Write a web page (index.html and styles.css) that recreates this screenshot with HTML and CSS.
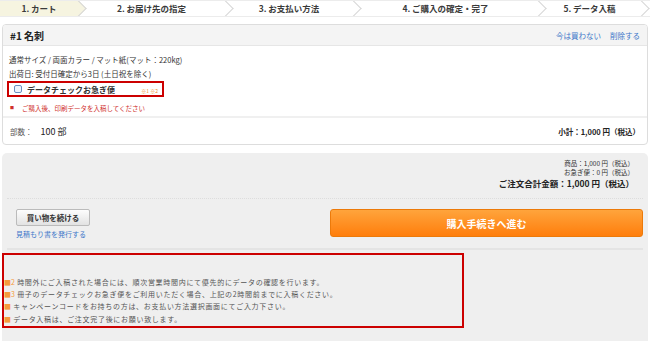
FILE: index.html
```html
<!DOCTYPE html>
<html lang="ja">
<head>
    <meta charset="UTF-8">
    <title>カート</title>
    <link rel="stylesheet" href="styles.css">
</head>
<body>
    <!-- ステップ表示 -->
    <div class="steps">
        <div class="step step-1 current">1. カート</div>
        <div class="step step-2">2. お届け先の指定</div>
        <div class="step step-3">3. お支払い方法</div>
        <div class="step step-4">4. ご購入の確定・完了</div>
        <div class="step step-5">5. データ入稿</div>
    </div>

    <!-- 商品カード -->
    <div class="card">
        <div class="card-head">
            <h2>#1 名刺</h2>
            <div class="head-links">
                <a href="#">今は買わない</a>
                <a href="#">削除する</a>
            </div>
        </div>
        <div class="card-body">
            <p class="spec">通常サイズ / 両面カラー / マット紙(マット：220kg)</p>
            <p class="spec">出荷日: 受付日確定から3日 (土日祝を除く)</p>
            <label class="express">
                <span class="checkbox"></span>
                <span class="express-label">データチェックお急ぎ便</span>
                <span class="express-note">※1 ※2</span>
            </label>
            <p class="warn"><span>■</span>ご購入後、印刷データを入稿してください</p>
        </div>
        <div class="card-foot">
            <div class="qty"><span>部数：</span> 100 部</div>
            <div class="subtotal">小計：1,000 円（税込）</div>
        </div>
    </div>

    <!-- 合計・購入 -->
    <div class="checkout">
        <div class="summary">
            <p>商品：1,000 円（税込）</p>
            <p>お急ぎ便：0 円（税込）</p>
            <p class="total">ご注文合計金額：1,000 円（税込）</p>
        </div>
        <div class="actions">
            <div class="left-actions">
                <button class="btn-continue">買い物を続ける</button>
                <a href="#" class="estimate">見積もり書を発行する</a>
            </div>
            <button class="btn-buy">購入手続きへ進む</button>
        </div>
        <div class="notes">
            <p><span class="mark">■2</span> 時間外にご入稿された場合には、順次営業時間内にて優先的にデータの確認を行います。</p>
            <p><span class="mark">■3</span> 冊子のデータチェックお急ぎ便をご利用いただく場合、上記の2時間前までに入稿ください。</p>
            <p><span class="mark">■</span> キャンペーンコードをお持ちの方は、お支払い方法選択画面にてご入力下さい。</p>
            <p><span class="mark">■</span> データ入稿は、ご注文完了後にお願い致します。</p>
        </div>
    </div>
</body>
</html>
```

FILE: styles.css
```css
body {
    margin: 0;
    font-family: "Noto Sans CJK JP", "Liberation Sans", sans-serif;
    color: #333;
    background: #fff;
    width: 650px;
    height: 341px;
    overflow: hidden;
}
p {
    margin: 0;
}
a {
    color: #3d77c9;
    text-decoration: none;
}

/* ステップ */
.steps {
    display: flex;
    height: 17px;
    border-top: 1px solid #ececec;
    border-bottom: 1px solid #ececec;
    box-sizing: border-box;
    overflow: hidden;
}
.step {
    position: relative;
    font-size: 8.5px;
    font-weight: bold;
    line-height: 15px;
    text-align: center;
    color: #3a3a3a;
    background: #fff;
}
.step::after {
    content: "";
    position: absolute;
    top: 1px;
    right: -6px;
    width: 12px;
    height: 12px;
    border-top: 1px solid #d6d6d6;
    border-right: 1px solid #d6d6d6;
    background: inherit;
    transform: rotate(45deg);
    z-index: 1;
}
.step.current {
    background: #f6f4e0;
}
.step-1 { width: 78px; }
.step-2 { width: 147px; }
.step-3 { width: 128px; }
.step-4 { width: 185px; }
.step-5 { width: 103px; }

/* カード */
.card {
    margin: 7px 2px 0;
    border: 1px solid #ddd;
    border-radius: 4px;
    overflow: hidden;
}
.card-head {
    display: flex;
    justify-content: space-between;
    align-items: center;
    height: 20px;
    padding: 0 7px;
    background: #f4f4f4;
    border-bottom: 1px solid #e6e6e6;
}
.card-head h2 {
    margin: 0;
    font-size: 10px;
    color: #222;
}
.head-links {
    display: flex;
    gap: 9px;
    font-size: 7.5px;
}
.card-body {
    padding: 7px 6px 3px;
}
.spec {
    font-size: 7.5px;
    line-height: 14px;
    color: #333;
}
.express {
    display: flex;
    align-items: center;
    width: 148px;
    height: 12px;
    margin: 0 0 0 -2px;
    padding: 0 0 0 5px;
    border: 2px solid #cc0000;
}
.checkbox {
    width: 6px;
    height: 6px;
    border: 1px solid #6a8fc0;
    border-radius: 2px;
    background: #eef4fc;
}
.express-label {
    margin-left: 5px;
    font-size: 8px;
    font-weight: bold;
    color: #333;
}
.express-note {
    margin-left: auto;
    margin-right: 4px;
    padding-top: 3px;
    font-size: 5px;
    color: #f08a24;
}
.warn {
    margin-top: 6px;
    padding-left: 1px;
    font-size: 6.5px;
    color: #d0312d;
}
.warn span {
    font-size: 4px;
    margin-right: 8px;
    vertical-align: 1px;
}
.card-foot {
    display: flex;
    justify-content: space-between;
    align-items: center;
    height: 26px;
    padding: 0 7px;
    border-top: 2px solid #f0f0f0;
}
.qty {
    font-size: 9px;
    color: #222;
}
.qty span {
    font-size: 7.5px;
    color: #555;
    margin-right: 6px;
}
.subtotal {
    font-size: 7.5px;
    font-weight: bold;
    color: #222;
}

/* 合計・購入 */
.checkout {
    margin: 8px 2px 0;
    padding: 6px 0 20px;
    background: #efefef;
    border-radius: 5px 5px 0 0;
}
.summary {
    text-align: right;
    padding: 0 9px 8px;
    margin: 0 5px;
    border-bottom: 1px dotted #ddd;
    font-size: 6.5px;
    line-height: 9px;
    color: #333;
}
.summary .total {
    font-size: 8.5px;
    line-height: 13px;
    font-weight: bold;
    color: #222;
}
.actions {
    display: flex;
    justify-content: space-between;
    margin: 0 5px;
    padding: 10px 0 9px 9px;
    border-bottom: 2px solid #e4e4e4;
}
.left-actions {
    display: flex;
    flex-direction: column;
    align-items: flex-start;
}
.btn-continue {
    width: 74px;
    height: 17px;
    padding: 0;
    font-family: inherit;
    font-size: 7.5px;
    font-weight: bold;
    color: #333;
    border: 1px solid #bbb;
    border-radius: 2px;
    background: linear-gradient(#fdfdfd, #e2e2e2);
}
.estimate {
    margin-top: 3px;
    font-size: 7px;
}
.btn-buy {
    width: 313px;
    height: 28px;
    font-family: inherit;
    font-size: 10px;
    font-weight: bold;
    color: #fff;
    border: 1px solid #ec7a0a;
    border-radius: 3px;
    background: linear-gradient(#ffa43c, #ff7e0c);
}
.notes {
    width: 458px;
    margin-top: 3px;
    padding: 21px 0 1px;
    border: 2px solid #cc0000;
    font-size: 7px;
    line-height: 12.2px;
    color: #555;
    letter-spacing: 0.7px;
}
.notes .mark {
    color: #f59a3c;
    letter-spacing: 0;
}
```
